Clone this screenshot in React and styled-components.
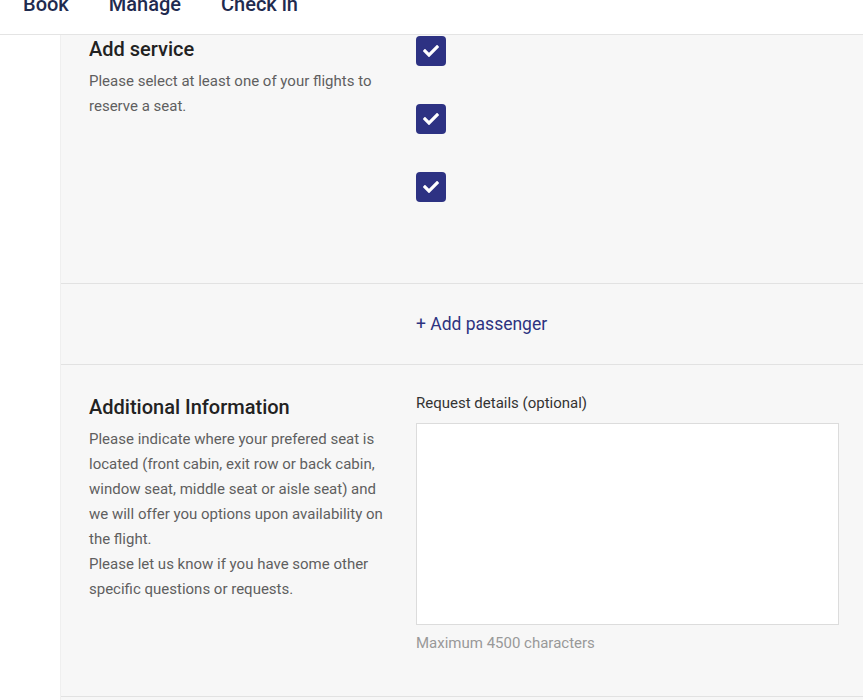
import React from 'react';
import styled, { createGlobalStyle } from 'styled-components';
import { FaCheck } from 'react-icons/fa';

const GlobalStyle = createGlobalStyle`
  html, body {
    margin: 0;
    padding: 0;
    background: #ffffff;
    font-family: Roboto, "Liberation Sans", Arial, sans-serif;
  }
  * {
    box-sizing: border-box;
  }
`;

const Page = styled.div`
  width: 863px;
  height: 700px;
  overflow: hidden;
  display: flex;
  flex-direction: column;
`;

const Header = styled.header`
  height: 35px;
  flex-shrink: 0;
  border-bottom: 1px solid #e4e4e4;
  background: #ffffff;
  display: flex;
  align-items: flex-start;
  gap: 40px;
  padding-left: 23px;
  overflow: hidden;
`;

const NavLink = styled.a`
  font-size: 20px;
  line-height: 22px;
  margin-top: -7px;
  font-weight: 500;
  color: #1f2b4f;
  text-decoration: none;
`;

const Body = styled.div`
  flex: 1;
  display: flex;
`;

const Gutter = styled.div`
  width: 60px;
  flex-shrink: 0;
  background: #ffffff;
`;

const Panel = styled.div`
  flex: 1;
  background: #f7f7f7;
  border-left: 1px solid #efefef;
  display: flex;
  flex-direction: column;
`;

const Section = styled.section`
  display: grid;
  grid-template-columns: 327px 1fr;
  padding: ${p => p.$pad};
  padding-left: 28px;
  padding-right: 24px;
  border-bottom: 1px solid #e2e2e2;
`;

const Intro = styled.div`
  display: flex;
  flex-direction: column;
  padding-right: 30px;
`;

const Title = styled.h2`
  margin: 0;
  font-size: 20px;
  line-height: 24px;
  font-weight: 500;
  color: #222222;
`;

const Text = styled.p`
  margin: 8px 0 0;
  font-size: 15px;
  line-height: 25px;
  color: #5f5f5f;
`;

const TextLine = styled.span`
  display: block;
`;

const CheckList = styled.div`
  display: flex;
  flex-direction: column;
  gap: 38px;
  margin-top: -1px;
`;

const CheckBox = styled.span`
  width: 30px;
  height: 30px;
  border-radius: 4px;
  background: #2d3283;
  display: flex;
  align-items: center;
  justify-content: center;
  color: #ffffff;
  font-size: 16px;
`;

const AddLink = styled.a`
  font-size: 17.5px;
  line-height: 24px;
  color: #2d3380;
  text-decoration: none;
`;

const Field = styled.div`
  display: flex;
  flex-direction: column;
  margin-top: -2px;
`;

const Label = styled.label`
  font-size: 15px;
  line-height: 20px;
  color: #333333;
`;

const TextArea = styled.textarea`
  margin-top: 10px;
  height: 202px;
  width: 100%;
  border: 1px solid #dcdcdc;
  background: #ffffff;
  resize: none;
  font-family: inherit;
`;

const Hint = styled.span`
  margin-top: 8px;
  font-size: 15px;
  line-height: 20px;
  color: #999999;
`;

export default function App() {
  return (
    <>
      <GlobalStyle />
      <Page>
        <Header>
          <NavLink>Book</NavLink>
          <NavLink>Manage</NavLink>
          <NavLink>Check in</NavLink>
        </Header>
        <Body>
          <Gutter />
          <Panel>
            <Section $pad="2px 0 81px">
              <Intro>
                <Title>Add service</Title>
                <Text>Please select at least one of your flights to reserve a seat.</Text>
              </Intro>
              <CheckList>
                {[0, 1, 2].map(i => (
                  <CheckBox key={i}><FaCheck /></CheckBox>
                ))}
              </CheckList>
            </Section>
            <Section $pad="28px 0 28px">
              <div />
              <AddLink>+ Add passenger</AddLink>
            </Section>
            <Section $pad="30px 0 43px">
              <Intro>
                <Title>Additional Information</Title>
                <Text>
                  <TextLine>Please indicate where your prefered seat is located (front cabin, exit row or back cabin, window seat, middle seat or aisle seat) and we will offer you options upon availability on the flight.</TextLine>
                  <TextLine>Please let us know if you have some other specific questions or requests.</TextLine>
                </Text>
              </Intro>
              <Field>
                <Label>Request details (optional)</Label>
                <TextArea />
                <Hint>Maximum 4500 characters</Hint>
              </Field>
            </Section>
          </Panel>
        </Body>
      </Page>
    </>
  );
}
